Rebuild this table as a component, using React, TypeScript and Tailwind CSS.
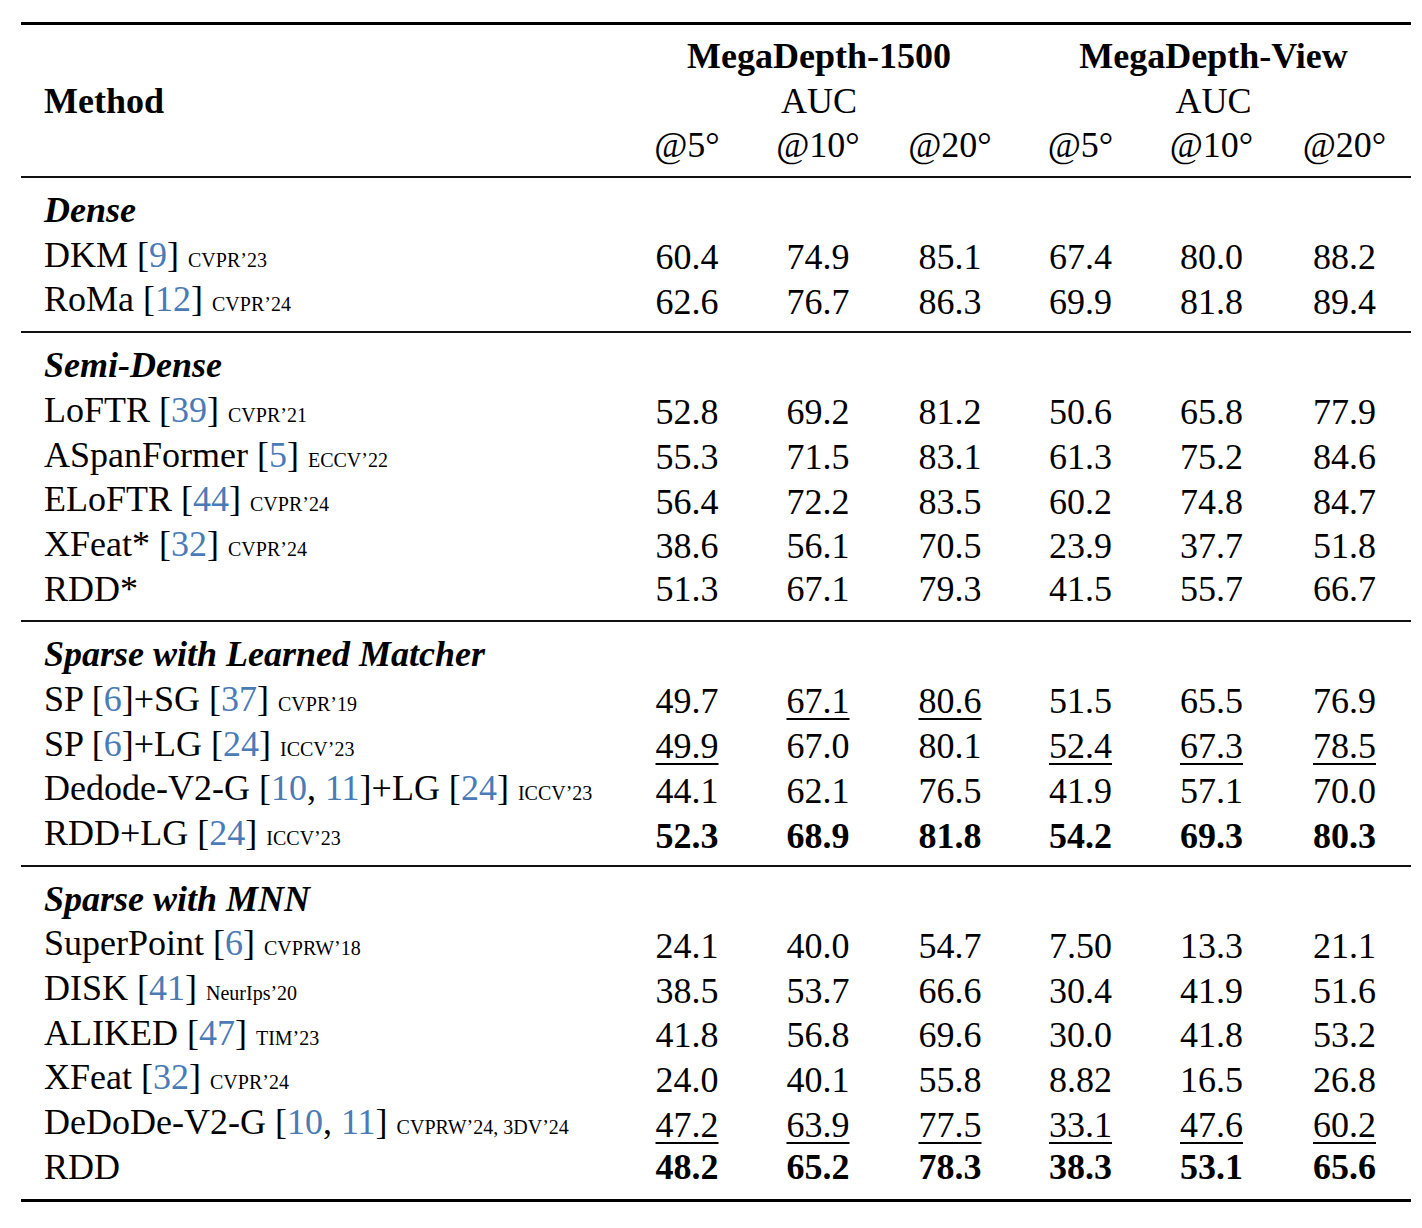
import React from "react";

type Row = { name: string; venue?: string; vals: string[] };
type Section = { title: string; rows: Row[] };

const sections: Section[] = [
  {
    title: "Dense",
    rows: [
      { name: "DKM [{9}]", venue: "CVPR’23", vals: ["60.4", "74.9", "85.1", "67.4", "80.0", "88.2"] },
      { name: "RoMa [{12}]", venue: "CVPR’24", vals: ["62.6", "76.7", "86.3", "69.9", "81.8", "89.4"] },
    ],
  },
  {
    title: "Semi-Dense",
    rows: [
      { name: "LoFTR [{39}]", venue: "CVPR’21", vals: ["52.8", "69.2", "81.2", "50.6", "65.8", "77.9"] },
      { name: "ASpanFormer [{5}]", venue: "ECCV’22", vals: ["55.3", "71.5", "83.1", "61.3", "75.2", "84.6"] },
      { name: "ELoFTR [{44}]", venue: "CVPR’24", vals: ["56.4", "72.2", "83.5", "60.2", "74.8", "84.7"] },
      { name: "XFeat* [{32}]", venue: "CVPR’24", vals: ["38.6", "56.1", "70.5", "23.9", "37.7", "51.8"] },
      { name: "RDD*", vals: ["51.3", "67.1", "79.3", "41.5", "55.7", "66.7"] },
    ],
  },
  {
    title: "Sparse with Learned Matcher",
    rows: [
      { name: "SP [{6}]+SG [{37}]", venue: "CVPR’19", vals: ["49.7", "_67.1", "_80.6", "51.5", "65.5", "76.9"] },
      { name: "SP [{6}]+LG [{24}]", venue: "ICCV’23", vals: ["_49.9", "67.0", "80.1", "_52.4", "_67.3", "_78.5"] },
      { name: "Dedode-V2-G [{10}, {11}]+LG [{24}]", venue: "ICCV’23", vals: ["44.1", "62.1", "76.5", "41.9", "57.1", "70.0"] },
      { name: "RDD+LG [{24}]", venue: "ICCV’23", vals: ["*52.3", "*68.9", "*81.8", "*54.2", "*69.3", "*80.3"] },
    ],
  },
  {
    title: "Sparse with MNN",
    rows: [
      { name: "SuperPoint [{6}]", venue: "CVPRW’18", vals: ["24.1", "40.0", "54.7", "7.50", "13.3", "21.1"] },
      { name: "DISK [{41}]", venue: "NeurIps’20", vals: ["38.5", "53.7", "66.6", "30.4", "41.9", "51.6"] },
      { name: "ALIKED [{47}]", venue: "TIM’23", vals: ["41.8", "56.8", "69.6", "30.0", "41.8", "53.2"] },
      { name: "XFeat [{32}]", venue: "CVPR’24", vals: ["24.0", "40.1", "55.8", "8.82", "16.5", "26.8"] },
      { name: "DeDoDe-V2-G [{10}, {11}]", venue: "CVPRW’24, 3DV’24", vals: ["_47.2", "_63.9", "_77.5", "_33.1", "_47.6", "_60.2"] },
      { name: "RDD", vals: ["*48.2", "*65.2", "*78.3", "*38.3", "*53.1", "*65.6"] },
    ],
  },
];

const grid = "grid grid-cols-[601px_130px_132px_132px_129px_133px_133px] h-[44.7px] leading-[44.7px] items-center";

// "{n}" marks a citation number, drawn in link blue
const Name = ({ text }: { text: string }) => {
  const parts = text.split(/\{([^}]+)\}/);
  return (
    <>
      {parts.map((p, i) =>
        i % 2 === 1 ? (
          <span key={i} className="text-[#4a7bb7]">{p}</span>
        ) : (
          <span key={i}>{p}</span>
        )
      )}
    </>
  );
};

const Val = ({ v }: { v: string }) => {
  if (v.startsWith("*")) return <span className="font-bold">{v.slice(1)}</span>;
  if (v.startsWith("_"))
    return <span className="underline decoration-[2px] underline-offset-[5px]">{v.slice(1)}</span>;
  return <span>{v}</span>;
};

const Rule = ({ thick }: { thick?: boolean }) => (
  <div className={thick ? "h-[3px] bg-black" : "h-[2px] bg-[#111]"} />
);

export default function App() {
  return (
    <div className="w-[1422px] h-[1228px] bg-white pt-[22px] text-black font-['Liberation_Serif','Times_New_Roman',serif] text-[36px]">
      <div className="ml-[21px] w-[1390px]">
        <Rule thick />
        <div className="pt-[9px] pb-[8px]">
          <div className={grid}>
            <div />
            <div className="col-span-3 text-center font-bold">MegaDepth-1500</div>
            <div className="col-span-3 text-center font-bold">MegaDepth-View</div>
          </div>
          <div className={grid}>
            <div className="pl-[23px] font-bold">Method</div>
            <div className="col-span-3 text-center">AUC</div>
            <div className="col-span-3 text-center">AUC</div>
          </div>
          <div className={grid}>
            <div />
            {["@5°", "@10°", "@20°", "@5°", "@10°", "@20°"].map((h, i) => (
              <div key={i} className="text-center">{h}</div>
            ))}
          </div>
        </div>

        {sections.map((s, si) => (
          <div key={s.title}>
            <Rule />
            <div className="pt-[10px] pb-[9px]">
              <div className={grid}>
                <div className="pl-[23px] font-bold italic whitespace-nowrap">{s.title}</div>
              </div>
              {s.rows.map((r) => (
                <div key={r.name} className={grid}>
                  <div className="pl-[23px] whitespace-nowrap">
                    <Name text={r.name} />
                    {r.venue && (
                      <>
                        {" "}
                        <span className="text-[20px]">{r.venue}</span>
                      </>
                    )}
                  </div>
                  {r.vals.map((v, i) => (
                    <div key={i} className="text-center">
                      <Val v={v} />
                    </div>
                  ))}
                </div>
              ))}
            </div>
            {si === sections.length - 1 && <Rule thick />}
          </div>
        ))}
      </div>
    </div>
  );
}
